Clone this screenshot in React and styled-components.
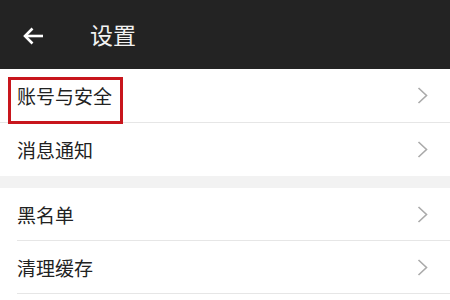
import React from 'react';
import styled, { createGlobalStyle } from 'styled-components';

const GlobalStyle = createGlobalStyle`
  html, body {
    margin: 0;
    padding: 0;
    background: #ffffff;
  }
  body {
    font-family: "Noto Sans CJK SC", "Noto Sans", sans-serif;
  }
`;

const Page = styled.div`
  width: 450px;
  height: 300px;
  overflow: hidden;
  background: #ffffff;
`;

const Header = styled.header`
  height: 69px;
  background: #232323;
  display: flex;
  align-items: center;
  padding-left: 23px;
  box-sizing: border-box;
`;

const BackButton = styled.button`
  display: flex;
  align-items: center;
  padding: 0;
  margin: 2px 0 0 0;
  border: none;
  background: none;
  width: 67px;
`;

const Title = styled.h1`
  margin: 0;
  font-size: 23px;
  font-weight: 400;
  color: #f2f2f2;
  line-height: 1;
`;

const Group = styled.div`
  background: #ffffff;
`;

const Gap = styled.div`
  height: 12px;
  background: #f2f2f2;
`;

const Row = styled.div`
  height: 53px;
  display: flex;
  align-items: center;
  justify-content: space-between;
  padding: 0 22px 0 17px;
  box-sizing: content-box;
  position: relative;
  border-bottom: ${(p) => (p.$last ? 'none' : '1px solid #e6e6e6')};

  &::after {
    content: '';
    display: ${(p) => (p.$inset ? 'block' : 'none')};
    position: absolute;
    left: 17px;
    right: 0;
    bottom: 0;
    height: 1px;
    background: #e6e6e6;
  }
`;

const Label = styled.span`
  position: relative;
  font-size: 19px;
  line-height: 24px;
  color: #222222;

  &::after {
    content: '';
    display: ${(p) => (p.$highlight ? 'block' : 'none')};
    position: absolute;
    left: -9px;
    right: -11px;
    top: -7px;
    bottom: -16px;
    border: 3px solid #c8161d;
  }
`;

const Chevron = () => (
  <svg width="11" height="17" viewBox="0 0 11 17" fill="none">
    <polyline points="1.5,1 9.5,8.5 1.5,16" stroke="#aaaaaa" strokeWidth="1.6" />
  </svg>
);

const BackArrow = () => (
  <svg width="21" height="18" viewBox="0 0 21 18" fill="none">
    <line x1="2" y1="9" x2="20" y2="9" stroke="#ffffff" strokeWidth="2.6" />
    <polyline points="9.5,1.5 2,9 9.5,16.5" stroke="#ffffff" strokeWidth="2.6" />
  </svg>
);

export default function App() {
  return (
    <Page>
      <GlobalStyle />
      <Header>
        <BackButton aria-label="返回">
          <BackArrow />
        </BackButton>
        <Title>设置</Title>
      </Header>
      <Group>
        <Row>
          <Label $highlight>账号与安全</Label>
          <Chevron />
        </Row>
        <Row $last>
          <Label>消息通知</Label>
          <Chevron />
        </Row>
      </Group>
      <Gap />
      <Group>
        <Row $last $inset>
          <Label>黑名单</Label>
          <Chevron />
        </Row>
        <Row $last $inset>
          <Label>清理缓存</Label>
          <Chevron />
        </Row>
      </Group>
    </Page>
  );
}
